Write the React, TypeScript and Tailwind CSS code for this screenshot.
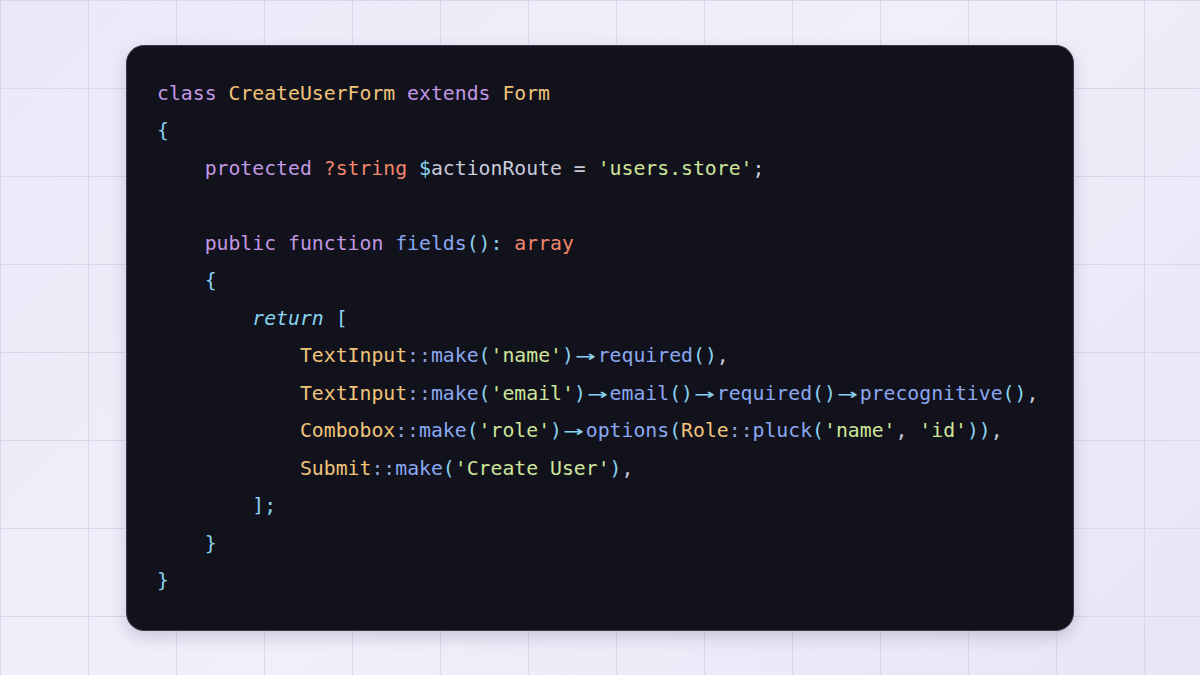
import React from "react";

type Tok = [string, string, boolean?];

const KW = "text-[#c397e4]";
const CLS = "text-[#f0c479]";
const TYPE = "text-[#f0866b]";
const PUN = "text-[#89d3f0]";
const VAR = "text-[#c9cbdc]";
const STR = "text-[#cfe59a]";
const FN = "text-[#8ba8f0]";
const SEP = "text-[#8e9dd3]";
const ARROW = "__arrow__";

const A: Tok = ["", ARROW];

const lines: Tok[][] = [
  [["class ", KW], ["CreateUserForm ", CLS], ["extends ", KW], ["Form", CLS]],
  [["{", PUN]],
  [["    ", VAR], ["protected ", KW], ["?string ", TYPE], ["$", PUN], ["actionRoute ", VAR], ["= ", VAR], ["'users.store'", STR], [";", VAR]],
  [],
  [["    ", VAR], ["public ", KW], ["function ", KW], ["fields", FN], ["():", PUN], [" ", VAR], ["array", TYPE]],
  [["    ", VAR], ["{", PUN]],
  [["        ", VAR], ["return", PUN, true], [" [", PUN]],
  [["            ", VAR], ["TextInput", CLS], ["::", SEP], ["make", FN], ["(", PUN], ["'name'", STR], [")", PUN], A, ["required", FN], ["()", PUN], [",", VAR]],
  [["            ", VAR], ["TextInput", CLS], ["::", SEP], ["make", FN], ["(", PUN], ["'email'", STR], [")", PUN], A, ["email", FN], ["()", PUN], A, ["required", FN], ["()", PUN], A, ["precognitive", FN], ["()", PUN], [",", VAR]],
  [["            ", VAR], ["Combobox", CLS], ["::", SEP], ["make", FN], ["(", PUN], ["'role'", STR], [")", PUN], A, ["options", FN], ["(", PUN], ["Role", CLS], ["::", SEP], ["pluck", FN], ["(", PUN], ["'name'", STR], [", ", VAR], ["'id'", STR], ["))", PUN], [",", VAR]],
  [["            ", VAR], ["Submit", CLS], ["::", SEP], ["make", FN], ["(", PUN], ["'Create User'", STR], [")", PUN], [",", VAR]],
  [["        ", VAR], ["];", PUN]],
  [["    ", VAR], ["}", PUN]],
  [["}", PUN]],
];

export default function App() {
  return (
    <div className="w-[1200px] h-[675px] overflow-hidden flex items-center justify-center bg-[#eceaf8] bg-[linear-gradient(to_right,#dad7ea_1px,transparent_1px),linear-gradient(to_bottom,#dad7ea_1px,transparent_1px),linear-gradient(135deg,#ebe9f8,#f0effa_50%,#e8e5f6)] bg-[size:88px_88px,88px_88px,100%_100%]">
      <div className="w-[948px] rounded-[18px] border border-[#3b3c4b] bg-[#11121c] pl-[30px] pt-[29px] pb-[30px] shadow-[0_6px_16px_rgba(40,30,80,0.18)]">
        <pre className="m-0 font-['DejaVu_Sans_Mono','Liberation_Mono',monospace] text-[19.8px] leading-[37.5px]">
          {lines.map((line, i) => (
            <div key={i} className="h-[37.5px] whitespace-pre">
              {line.map((t, j) =>
                t[1] === ARROW ? (
                  <span key={j} className="inline-block w-[23.8px] text-center text-[#89d3f0]">
                    <span className="inline-block scale-x-[1.7]">→</span>
                  </span>
                ) : (
                  <span key={j} className={`${t[1]} ${t[2] ? "italic" : ""}`}>
                    {t[0]}
                  </span>
                )
              )}
            </div>
          ))}
        </pre>
      </div>
    </div>
  );
}
